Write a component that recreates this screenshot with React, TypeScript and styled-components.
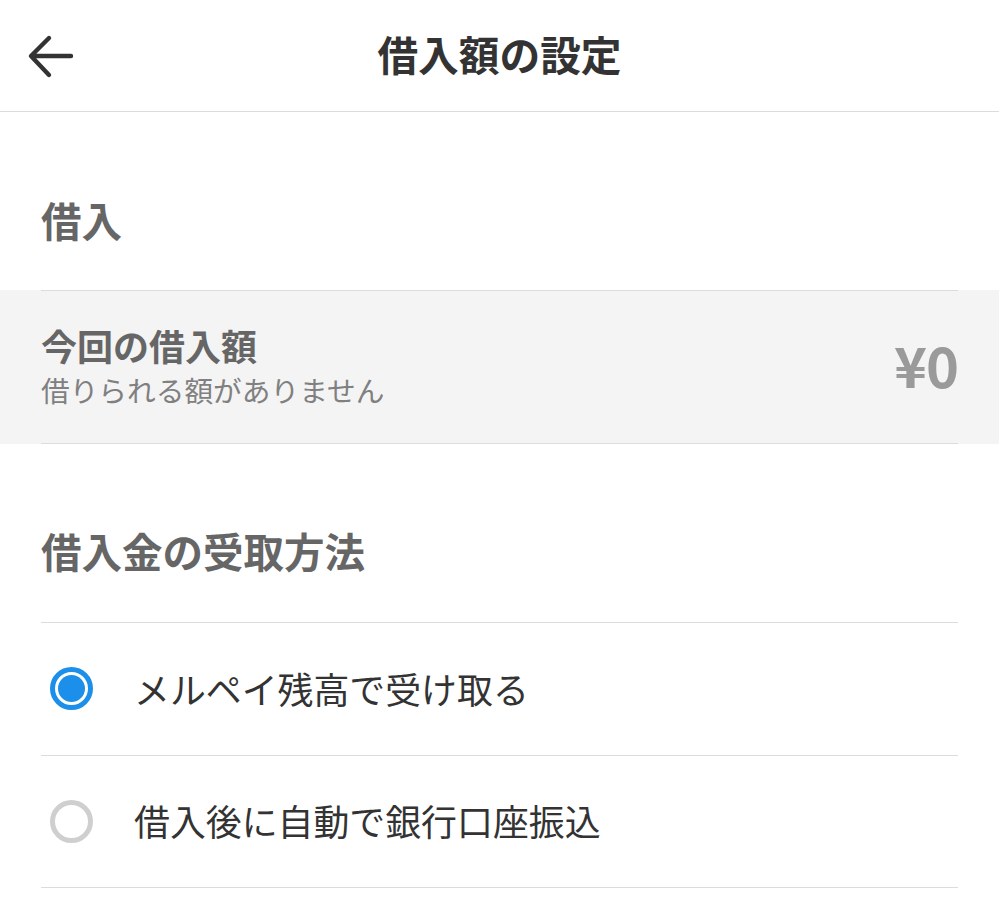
import { useState } from 'react';
import styled, { createGlobalStyle } from 'styled-components';

const GlobalStyle = createGlobalStyle`
  * { box-sizing: border-box; margin: 0; padding: 0; }
  body {
    background: #fff;
    font-family: "Noto Sans CJK JP", "Noto Sans", sans-serif;
    color: #333;
  }
`;

const Screen = styled.div`
  width: 999px;
  min-height: 910px;
  background: #fff;
`;

const Header = styled.header`
  height: 112px;
  display: grid;
  grid-template-columns: 100px 1fr 100px;
  align-items: center;
  border-bottom: 1px solid #dcdcdc;
`;

const BackButton = styled.button`
  border: none;
  background: none;
  width: 60px;
  height: 60px;
  margin-left: 20px;
  display: flex;
  align-items: center;
  justify-content: center;
  cursor: pointer;
`;

const Title = styled.h1`
  text-align: center;
  font-size: 40.7px;
  font-weight: 700;
  color: #333;
  line-height: 1;
  margin-top: -3px;
`;

const SectionTitle = styled.h2<{ $top: number }>`
  padding: ${(p) => p.$top}px 41px 0;
  height: 178px;
  font-size: 40.5px;
  font-weight: 700;
  line-height: 56px;
  color: #666;
`;

const AmountBand = styled.div`
  background: #f4f4f4;
  padding: 0 41px;
`;

const AmountRow = styled.div`
  height: 154px;
  border-top: 1px solid #dcdcdc;
  border-bottom: 1px solid #dcdcdc;
  display: flex;
  align-items: center;
  justify-content: space-between;
`;

const AmountText = styled.div`
  display: flex;
  flex-direction: column;
  gap: 3px;
  margin-top: -1px;
`;

const AmountLabel = styled.div`
  font-size: 36px;
  font-weight: 700;
  color: #666;
  line-height: 44px;
`;

const AmountNote = styled.div`
  font-size: 28.7px;
  color: #808080;
  line-height: 40px;
`;

const AmountValue = styled.div`
  font-size: 56px;
  font-weight: 700;
  color: #9a9a9a;
  line-height: 1;
  letter-spacing: -1px;
  margin-top: -6px;
`;

const OptionList = styled.ul`
  list-style: none;
  margin: 0 41px;
  border-top: 1px solid #dcdcdc;
`;

const Option = styled.li`
  height: 132.5px;
  border-bottom: 1px solid #dcdcdc;
  display: flex;
  align-items: center;
  gap: 41px;
  padding-left: 9px;
  cursor: pointer;
`;

const RadioMark = styled.span<{ $checked: boolean }>`
  width: 43px;
  height: 43px;
  border-radius: 50%;
  border: 5px solid ${(p) => (p.$checked ? '#1b8fea' : '#cfcfcf')};
  display: flex;
  align-items: center;
  justify-content: center;
  flex-shrink: 0;

  &::after {
    content: '';
    width: 27px;
    height: 27px;
    border-radius: 50%;
    background: ${(p) => (p.$checked ? '#1b8fea' : 'transparent')};
  }
`;

const OptionLabel = styled.span`
  font-size: 35.9px;
  color: #333;
  line-height: 1;
`;

const OPTIONS = ['メルペイ残高で受け取る', '借入後に自動で銀行口座振込'];

function BackArrow() {
  return (
    <svg width="48" height="48" viewBox="0 0 48 48" fill="none">
      <path
        d="M45 24H6M23 6L5 24L23 43"
        stroke="#333"
        strokeWidth="4.4"
        strokeLinecap="round"
        strokeLinejoin="round"
      />
    </svg>
  );
}

export default function App() {
  const [selected, setSelected] = useState(0);

  return (
    <Screen>
      <GlobalStyle />
      <Header>
        <BackButton aria-label="戻る">
          <BackArrow />
        </BackButton>
        <Title>借入額の設定</Title>
        <div />
      </Header>

      <SectionTitle $top={80}>借入</SectionTitle>
      <AmountBand>
        <AmountRow>
          <AmountText>
            <AmountLabel>今回の借入額</AmountLabel>
            <AmountNote>借りられる額がありません</AmountNote>
          </AmountText>
          <AmountValue>¥0</AmountValue>
        </AmountRow>
      </AmountBand>

      <SectionTitle $top={79}>借入金の受取方法</SectionTitle>
      <OptionList>
        {OPTIONS.map((label, i) => (
          <Option key={label} onClick={() => setSelected(i)}>
            <RadioMark $checked={selected === i} />
            <OptionLabel>{label}</OptionLabel>
          </Option>
        ))}
      </OptionList>
    </Screen>
  );
}
